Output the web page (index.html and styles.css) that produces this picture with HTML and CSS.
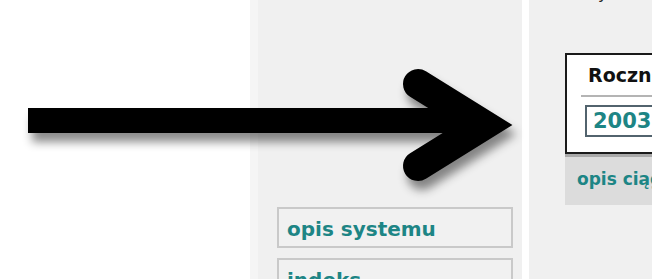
FILE: index.html
```html
<!DOCTYPE html>
<html lang="pl">
<head>
    <meta charset="UTF-8">
    <meta name="viewport" content="width=device-width, initial-scale=1.0">
    <title>Rocznik</title>
    <link rel="stylesheet" href="styles.css">
</head>
<body>

    <div class="page">
        <div class="blank"></div>

        <div class="sidebar">
            <a class="menu-item" href="#">opis systemu</a>
            <a class="menu-item" href="#">indeks</a>
        </div>

        <div class="main">
            <p class="top-line">wyszukaj</p>
            <div class="year-box">
                <div class="year-head">Rocznik</div>
                <div class="year-input">2003</div>
            </div>
            <div class="desc-bar">opis ciągów</div>
        </div>
    </div>

    <!-- strzałka nad stroną -->
    <svg class="arrow" width="652" height="279" viewBox="0 0 652 279">
        <defs>
            <filter id="shadow" x="-10%" y="-30%" width="130%" height="180%">
                <feDropShadow dx="4" dy="9" stdDeviation="5" flood-color="#000" flood-opacity="0.45"/>
            </filter>
        </defs>
        <g filter="url(#shadow)">
            <rect x="28" y="108" width="445" height="25" fill="#000"/>
            <polyline points="418,84 484,125 418,166" fill="none" stroke="#000"
                      stroke-width="30" stroke-linecap="round" stroke-linejoin="miter"/>
        </g>
    </svg>

</body>
</html>
```

FILE: styles.css
```css
body {
    margin: 0;
    font-family: "DejaVu Sans", Verdana, sans-serif;
    background-color: #fff;
    overflow: hidden;
}

.page {
    display: flex;
    height: 279px;
    overflow: hidden;
}

.blank {
    width: 250px;
    flex-shrink: 0;
}

.sidebar {
    width: 236px;
    flex-shrink: 0;
    background-color: #f0f0f0;
    padding: 207px 9px 0 19px;
    border-left: 8px solid #f5f5f5;
    display: flex;
    flex-direction: column;
    gap: 10px;
}

.menu-item {
    display: block;
    flex-shrink: 0;
    height: 35px;
    line-height: 37px;
    padding: 2px 0 0 8px;
    border: 2px solid #c9c9c9;
    background-color: #f1f1f1;
    color: #1d8585;
    font-size: 20px;
    font-weight: bold;
    text-decoration: none;
    white-space: nowrap;
    overflow: hidden;
}

.main {
    flex: 1;
    background-color: #f0f0f0;
    border-left: 7px solid #fff;
    padding-left: 36px;
    overflow: hidden;
}

.top-line {
    margin: -16px 0 0 20px;
    height: 19px;
    font-size: 16px;
    color: #222;
}

.year-box {
    width: 260px;
    margin-top: 50px;
    background-color: #fff;
    border: 2px solid #1a1a1a;
    padding: 0 0 15px 14px;
}

.year-head {
    padding: 9px 0 0 7px;
    height: 31px;
    border-bottom: 2px solid #b4b4b4;
    font-size: 19px;
    font-weight: bold;
    color: #111;
}

.year-input {
    margin: 8px 0 0 4px;
    width: 120px;
    height: 28px;
    line-height: 28px;
    border: 2px solid #52636d;
    padding-left: 6px;
    font-size: 21px;
    font-weight: bold;
    color: #1d8585;
}

.desc-bar {
    width: 276px;
    height: 48px;
    line-height: 44px;
    border-top: 3px solid #a9a9a9;
    background-color: #dcdcdc;
    padding-left: 12px;
    font-size: 17px;
    font-weight: bold;
    color: #1d8585;
    white-space: nowrap;
}

.arrow {
    position: absolute;
    top: 0;
    left: 0;
    pointer-events: none;
}
```
